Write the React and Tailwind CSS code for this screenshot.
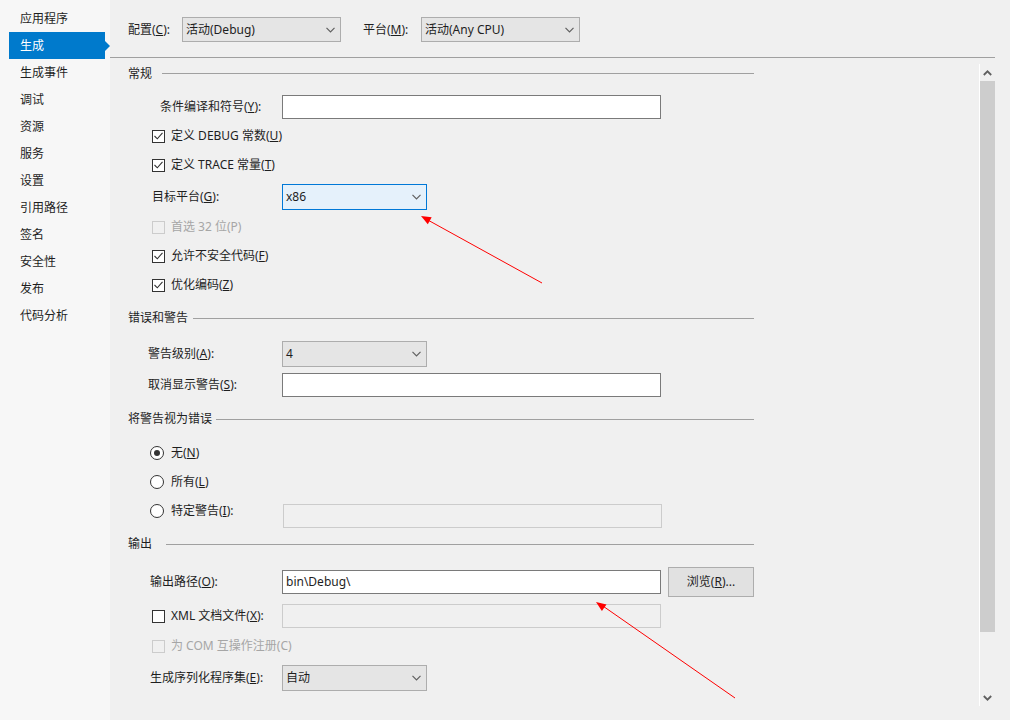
import React from 'react'

const navItems = ['应用程序', '生成', '生成事件', '调试', '资源', '服务', '设置', '引用路径', '签名', '安全性', '发布', '代码分析']

function Chevron() {
  return (
    <svg width="9" height="6" viewBox="0 0 9 6" className="shrink-0">
      <polyline points="0.5,0.8 4.5,4.8 8.5,0.8" fill="none" stroke="#606060" strokeWidth="1.2" />
    </svg>
  )
}

function Combo({ value, focused, className = '' }) {
  return (
    <div
      className={`flex items-center justify-between border pl-[3px] pr-[5px] ${className} ${
        focused ? 'border-[#0078d7] bg-[#e5f1fb]' : 'border-[#adadad] bg-[#e5e5e5]'
      }`}
    >
      <span>{value}</span>
      <Chevron />
    </div>
  )
}

function TextBox({ value, disabled, className = '' }) {
  return (
    <div
      className={`flex h-[24px] w-[379px] items-center border px-[3px] ${className} ${
        disabled ? 'border-[#cccccc] bg-[#f0f0f0]' : 'border-[#7a7a7a] bg-white'
      }`}
    >
      {value}
    </div>
  )
}

function Check({ checked, disabled, children }) {
  return (
    <div className="flex items-center gap-[6px] pl-[24px]">
      <span
        className={`flex h-[13px] w-[13px] items-center justify-center border ${
          disabled ? 'border-[#cccccc] bg-[#f0f0f0]' : 'border-[#333333] bg-white'
        }`}
      >
        {checked && (
          <svg width="9" height="8" viewBox="0 0 9 8">
            <polyline points="0.5,4 3.3,6.8 8.5,0.8" fill="none" stroke="#333333" strokeWidth="1.1" />
          </svg>
        )}
      </span>
      <span className={disabled ? 'text-[#a6a6a6]' : ''}>{children}</span>
    </div>
  )
}

function Radio({ checked, children }) {
  return (
    <div className="flex items-center gap-[7px] pl-[22px]">
      <span className="flex h-[14px] w-[14px] items-center justify-center rounded-full border border-[#333333] bg-white">
        {checked && <span className="h-[6px] w-[6px] rounded-full bg-[#333333]" />}
      </span>
      <span>{children}</span>
    </div>
  )
}

function Header({ title, gap }) {
  return (
    <div className="flex items-center">
      <span>{title}</span>
      <span className={`h-px flex-1 bg-[#a0a0a0] ${gap}`} />
    </div>
  )
}

export default function App() {
  return (
    <div className="relative flex h-[720px] w-[1010px] overflow-hidden font-['Noto_Sans','Noto_Sans_CJK_SC',sans-serif] text-[12px] leading-none text-[#1e1e1e]">
      <aside className="w-[110px] shrink-0 bg-[#f7f7f7] pt-[5px]">
        {navItems.map((item) =>
          item === '生成' ? (
            <div key={item} className="flex h-[27px] items-center">
              <div className="ml-[9px] flex h-[27px] w-[96px] items-center bg-[#007acc] pl-[11px] text-white">
                {item}
              </div>
              <span className="h-0 w-0 border-y-[5px] border-l-[5px] border-y-transparent border-l-[#007acc]" />
            </div>
          ) : (
            <div key={item} className="flex h-[27px] items-center pl-[20px]">
              {item}
            </div>
          )
        )}
      </aside>

      <main className="flex flex-1 flex-col bg-[#f0f0f0]">
        <div className="mr-[15px] flex h-[58px] shrink-0 items-center border-b border-[#a0a0a0] pl-[18px] pt-[2px]">
          <span className="w-[54px]">
            配置(<u>C</u>):
          </span>
          <Combo value="活动(Debug)" className="h-[25px] w-[159px]" />
          <span className="ml-[22px] w-[58px]">
            平台(<u>M</u>):
          </span>
          <Combo value="活动(Any CPU)" className="h-[25px] w-[159px]" />
        </div>

        <div className="flex flex-1">
          <div className="flex w-[644px] flex-col pl-[18px]">
            <div className="flex h-[30px] flex-col justify-center pt-px">
              <Header title="常规" gap="ml-[10px]" />
            </div>
            <div className="flex h-[37px] items-center">
              <span className="w-[154px] pl-[32px]">
                条件编译和符号(<u>Y</u>):
              </span>
              <TextBox />
            </div>
            <div className="flex h-[22px] items-center">
              <Check checked>
                定义 DEBUG 常数(<u>U</u>)
              </Check>
            </div>
            <div className="flex h-[36px] items-center">
              <Check checked>
                定义 TRACE 常量(<u>T</u>)
              </Check>
            </div>
            <div className="flex h-[27px] items-center">
              <span className="w-[154px] pl-[24px]">
                目标平台(<u>G</u>):
              </span>
              <Combo value="x86" focused className="h-[26px] w-[145px]" />
            </div>
            <div className="flex h-[34px] items-center">
              <Check disabled>首选 32 位(P)</Check>
            </div>
            <div className="flex h-[24px] items-center">
              <Check checked>
                允许不安全代码(<u>F</u>)
              </Check>
            </div>
            <div className="flex h-[34px] items-center">
              <Check checked>
                优化编码(<u>Z</u>)
              </Check>
            </div>

            <div className="flex h-[32px] flex-col justify-center">
              <Header title="错误和警告" gap="ml-[5px]" />
            </div>
            <div className="flex h-[39px] items-center">
              <span className="w-[154px] pl-[20px]">
                警告级别(<u>A</u>):
              </span>
              <Combo value="4" className="h-[26px] w-[145px]" />
            </div>
            <div className="flex h-[24px] items-center">
              <span className="w-[154px] pl-[20px]">
                取消显示警告(<u>S</u>):
              </span>
              <TextBox />
            </div>

            <div className="flex h-[44px] flex-col justify-center">
              <Header title="将警告视为错误" gap="ml-[4px]" />
            </div>
            <div className="flex h-[24px] items-center">
              <Radio checked>
                无(<u>N</u>)
              </Radio>
            </div>
            <div className="flex h-[34px] items-center">
              <Radio>
                所有(<u>L</u>)
              </Radio>
            </div>
            <div className="flex h-[24px] items-center">
              <div className="w-[155px]">
                <Radio>
                  特定警告(<u>I</u>):
                </Radio>
              </div>
              <TextBox disabled className="mt-[10px]" />
            </div>

            <div className="flex h-[42px] flex-col justify-center">
              <Header title="输出" gap="ml-[14px]" />
            </div>
            <div className="flex h-[33px] items-center">
              <span className="w-[154px] pl-[22px]">
                输出路径(<u>O</u>):
              </span>
              <TextBox value="bin\Debug\" />
              <button
                type="button"
                className="ml-[7px] flex h-[30px] w-[86px] items-center justify-center border border-[#adadad] bg-[#e1e1e1]"
              >
                浏览(<u>R</u>)...
              </button>
            </div>
            <div className="flex h-[36px] items-center">
              <div className="w-[154px]">
                <Check>
                  XML 文档文件(<u>X</u>):
                </Check>
              </div>
              <TextBox disabled />
            </div>
            <div className="flex h-[24px] items-center">
              <Check disabled>为 COM 互操作注册(C)</Check>
            </div>
            <div className="flex h-[39px] items-center">
              <span className="w-[154px] pl-[22px]">
                生成序列化程序集(<u>E</u>):
              </span>
              <Combo value="自动" className="h-[26px] w-[145px]" />
            </div>
          </div>

          <div className="ml-auto mr-[15px] mt-[6px] mb-[14px] flex w-[16px] flex-col border-l border-white bg-[#f0f0f0]">
            <div className="flex h-[17px] items-center justify-center">
              <svg width="9" height="6" viewBox="0 0 9 6">
                <polyline points="0.8,5 4.5,1.3 8.2,5" fill="none" stroke="#606060" strokeWidth="1.8" />
              </svg>
            </div>
            <div className="h-[551px] bg-[#cdcdcd]" />
            <div className="flex flex-1 items-end justify-center pb-[5px]">
              <svg width="9" height="6" viewBox="0 0 9 6">
                <polyline points="0.8,1 4.5,4.7 8.2,1" fill="none" stroke="#606060" strokeWidth="1.8" />
              </svg>
            </div>
          </div>
        </div>
      </main>

      <svg className="pointer-events-none absolute left-0 top-0" width="1010" height="720">
        <line x1="542" y1="283" x2="426" y2="219" stroke="#ff0000" strokeWidth="1" />
        <polygon points="421,216 431.7,217.3 427.8,224.3" fill="#ff0000" />
        <line x1="735" y1="698" x2="600" y2="604" stroke="#ff0000" strokeWidth="1" />
        <polygon points="596,602 606.5,604.5 601.9,611" fill="#ff0000" />
      </svg>
    </div>
  )
}
